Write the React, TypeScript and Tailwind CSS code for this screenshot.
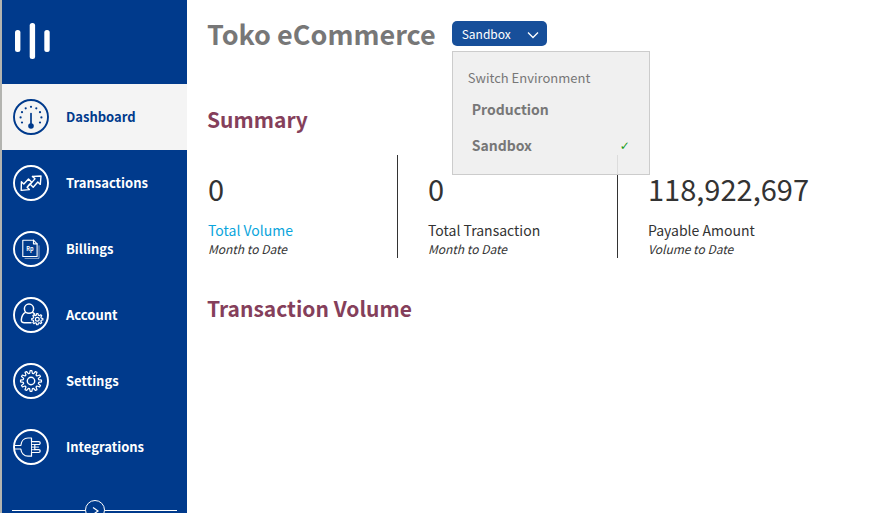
import { useState, type ReactNode } from "react";

function Ring({ children }: { children: ReactNode }) {
  return (
    <svg
      viewBox="0 0 36 36"
      className="h-9 w-9 shrink-0"
      fill="none"
      stroke="currentColor"
      strokeWidth="1.2"
      strokeLinejoin="round"
      strokeLinecap="round"
      aria-hidden="true"
    >
      <circle cx="18" cy="18" r="17" strokeWidth="1.9" />
      {children}
    </svg>
  );
}

function gearPath(cx: number, cy: number, outer: number, inner: number, teeth: number) {
  const step = (Math.PI * 2) / teeth;
  const points: string[] = [];
  for (let i = 0; i < teeth; i++) {
    const a = i * step - Math.PI / 2;
    const corners: [number, number][] = [
      [inner, a - step * 0.34],
      [outer, a - step * 0.16],
      [outer, a + step * 0.16],
      [inner, a + step * 0.34],
    ];
    corners.forEach(([r, t]) =>
      points.push(`${(cx + r * Math.cos(t)).toFixed(2)} ${(cy + r * Math.sin(t)).toFixed(2)}`)
    );
  }
  return `M${points.join("L")}Z`;
}

const gaugeDots = [
  [9, 23.5], [7.6, 18.4], [9, 13.2], [12.7, 9.3], [18, 7.8],
  [23.3, 9.3], [27, 13.2], [28.4, 18.4], [27, 23.5],
];

const items: { label: string; icon: ReactNode }[] = [
  {
    label: "Dashboard",
    icon: (
      <Ring>
        {gaugeDots.map(([x, y]) => (
          <circle key={`${x}-${y}`} cx={x} cy={y} r="1.1" fill="currentColor" stroke="none" />
        ))}
        <path d="M18 14.5V26" strokeWidth="1.7" />
        <circle cx="18" cy="27" r="2.8" fill="currentColor" stroke="none" />
      </Ring>
    ),
  },
  {
    label: "Transactions",
    icon: (
      <Ring>
        <path d="M19.5 11.5 28 11l-.7 8.4-2.5-2.4-4.6 5.2-3.2-3.2-1.6 1.7" strokeWidth="1.4" />
        <path d="m20.4 15.6 1.6-1.8-2.5-2.3M18.2 18l2.2-2.4" strokeWidth="1.4" />
        <path d="m8.4 16.8 2.4 2.2 4.7-5 3.2 3.2-4.6 5 2.3 2.4-8.2.8.2-8.6Z" strokeWidth="1.4" />
      </Ring>
    ),
  },
  {
    label: "Billings",
    icon: (
      <Ring>
        <path d="M9.8 9.2h10.700l3.600 3.600v12.700H9.800z" strokeWidth="1.1" />
        <path d="M20.500 9.200v3.600h3.600" />
        <path d="M12 27.400h14V14.800" strokeWidth="0.8" opacity="0.7" />
        <text x="13.200" y="20" fill="currentColor" stroke="none" fontSize="5.500" fontWeight="700" fontFamily="Noto Sans CJK SC, sans-serif">
          Rp
        </text>
      </Ring>
    ),
  },
  {
    label: "Account",
    icon: (
      <Ring>
        <circle cx="16" cy="11.700" r="4.600" strokeWidth="1.500" />
        <path d="M12.500 15.300c-2.800 1.400-4 4.200-4.200 7.700-.1 2 1.200 2.700 3 2.700H18" strokeWidth="1.500" />
        <path d="M19.600 15.300c.9.5 1.600 1.100 2.200 1.900" strokeWidth="1.500" />
        <path d={gearPath(24.3, 22.2, 5.6, 4.1, 8)} strokeWidth="1.200" />
        <circle cx="24.300" cy="22.200" r="1.900" strokeWidth="1.200" />
      </Ring>
    ),
  },
  {
    label: "Settings",
    icon: (
      <Ring>
        <path d={gearPath(18, 18, 10.5, 7.8, 12)} strokeWidth="1.200" />
        <circle cx="18" cy="18" r="3.700" strokeWidth="1.400" />
      </Ring>
    ),
  },
  {
    label: "Integrations",
    icon: (
      <Ring>
        <path d="M1.500 16.500h6.300C8.200 12.200 11 9 15 9h3.500v3.700h7.300a1.400 1.400 0 0 1 0 2.800h-4v5.200h4a1.400 1.400 0 0 1 0 2.800h-7.300V27.200H15c-4 0-6.800-3.200-7.200-7.200H1.500" />
        <path d="M18.500 12.700v10.800M18.500 15.500h3.300M18.500 20.700h3.300M18.500 18.100h7" strokeWidth="0.900" />
      </Ring>
    ),
  },
];

const stats = [
  { value: "0", label: "Total Volume", period: "Month to Date", link: true },
  { value: "0", label: "Total Transaction", period: "Month to Date", link: false },
  { value: "118,922,697", label: "Payable Amount", period: "Volume to Date", link: false },
];

export default function App() {
  const [open, setOpen] = useState(true);
  const [environment, setEnvironment] = useState("Sandbox");

  return (
    <div className="flex h-screen overflow-hidden bg-white font-['Noto_Sans_CJK_SC','Noto_Sans',sans-serif] text-[#333]">
      <aside className="flex w-[187px] shrink-0 flex-col border-l-2 border-[#b3b4b0] bg-[#003a8c] text-white">
        <div className="flex h-[82px] shrink-0 items-center px-[13px]">
          <svg viewBox="0 0 36 36" className="h-9 w-9" fill="currentColor" role="img" aria-label="Home">
            <rect x="0" y="7" width="5.400" height="22" rx="2.500" />
            <rect x="14.700" y="0" width="5.400" height="36" rx="2.500" />
            <rect x="29.300" y="7" width="5.400" height="22" rx="2.500" />
          </svg>
        </div>
        <nav className="mt-[2px] shrink-0">
          {items.map((item, i) => (
            <a
              key={item.label}
              href="#"
              aria-current={i === 0 ? "page" : undefined}
              className={
                "flex h-[66px] items-center gap-[17px] pl-[11px] text-[13px] leading-5 font-bold " +
                (i === 0 ? "bg-[#f4f4f4] text-[#003a8c]" : "")
              }
            >
              {item.icon}
              {item.label}
            </a>
          ))}
        </nav>
        <div className="mt-5 flex shrink-0 items-center px-[10px]">
          <span className="h-px flex-1 bg-white" />
          <button type="button" aria-label="Collapse sidebar" className="flex h-5 w-5 items-center justify-center rounded-full border border-white">
            <svg viewBox="0 0 10 10" className="h-[10px] w-[10px]" fill="none" stroke="currentColor" strokeWidth="1.200" aria-hidden="true">
              <path d="m3 2.500 5 3.500-5 3.500" />
            </svg>
          </button>
          <span className="h-px flex-1 bg-white" />
        </div>
      </aside>

      <main className="min-w-0 flex-1 pt-[13px] pr-[37px] pl-5">
        <header className="flex items-center gap-4">
          <h1 className="text-[27px] leading-[41px] font-bold text-[#777]">Toko eCommerce</h1>
          <div className="relative">
            <button
              type="button"
              aria-haspopup="menu"
              aria-expanded={open}
              onClick={() => setOpen(!open)}
              className="flex h-[25px] w-[95px] items-center justify-between rounded-[5px] bg-[#174f9a] pr-2 pl-[10px] text-[12px] text-white"
            >
              {environment}
              <svg viewBox="0 0 12 12" className="h-3 w-3" fill="none" stroke="currentColor" strokeWidth="1.300" aria-hidden="true">
                <path d="m1 4.500 5 5 5-5" />
              </svg>
            </button>
            {open && (
              <div role="menu" className="absolute top-[30px] left-0 w-[198px] border border-[#ccc] bg-[#eee]/90 px-[15px] pt-4 pb-[11px]">
                <p className="mb-[3px] text-[13px] leading-5 text-[#777]">Switch Environment</p>
                {["Production", "Sandbox"].map((name) => (
                  <button
                    key={name}
                    type="button"
                    role="menuitemradio"
                    aria-checked={environment === name}
                    onClick={() => setEnvironment(name)}
                    className="flex h-9 w-full items-center justify-between px-1 text-[14px] leading-5 font-bold text-[#777]"
                  >
                    {name}
                    {environment === name && (
                      <span className="pt-[2px] font-['DejaVu_Sans',sans-serif] text-[12px] font-normal text-[#1a9c1a]">✓</span>
                    )}
                  </button>
                ))}
              </div>
            )}
          </div>
        </header>

        <h2 className="mt-[49px] text-[21px] leading-8 font-bold text-[#853f5b]">Summary</h2>
        <section className="mt-5 grid grid-cols-3 gap-[29px]">
          {stats.map((stat, i) => (
            <div key={stat.label} className={"h-[103px] pt-[13px] pl-px " + (i < 2 ? "border-r border-[#333]" : "")}>
              <p className="text-[29px] leading-10">{stat.value}</p>
              {stat.link ? (
                <a href="#" className="mt-[10px] block text-[14px] leading-6 text-[#0ba5dc]">{stat.label}</a>
              ) : (
                <p className="mt-[10px] text-[14px] leading-6">{stat.label}</p>
              )}
              <p className="text-[12px] leading-[14px] italic">{stat.period}</p>
            </div>
          ))}
        </section>
        <h2 className="mt-[34px] text-[21px] leading-8 font-bold text-[#853f5b]">Transaction Volume</h2>
      </main>
    </div>
  );
}
